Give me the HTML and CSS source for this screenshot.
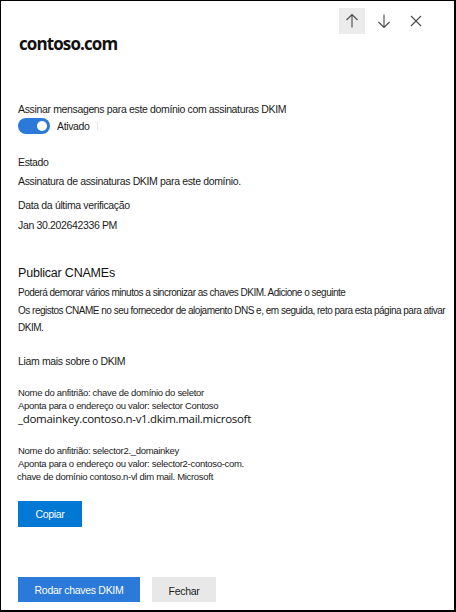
FILE: index.html
```html
<!DOCTYPE html>
<html lang="pt">
  <head>
    <meta charset="UTF-8" />
    <meta name="viewport" content="width=device-width, initial-scale=1.0" />
    <title>contoso.com</title>
    <link rel="stylesheet" href="styles.css">
  </head>
  <body>
    <div class="panel">
      <div class="panel-actions">
        <button class="icon-btn active" title="Anterior">
          <svg width="16" height="16" viewBox="0 0 16 16">
            <path d="M8 1.5V14.5M2.5 7L8 1.5L13.5 7" />
          </svg>
        </button>
        <button class="icon-btn" title="Seguinte">
          <svg width="16" height="16" viewBox="0 0 16 16">
            <path d="M8 1.5V14.5M2.5 9L8 14.5L13.5 9" />
          </svg>
        </button>
        <button class="icon-btn" title="Fechar">
          <svg width="16" height="16" viewBox="0 0 16 16">
            <path d="M3 3L13 13M13 3L3 13" />
          </svg>
        </button>
      </div>

      <h1 class="panel-title">contoso.com</h1>

      <div class="field-label">Assinar mensagens para este domínio com assinaturas DKIM</div>
      <div class="toggle-row">
        <span class="toggle"><span class="knob"></span></span>
        <span class="toggle-text">Ativado</span>
        <span class="toggle-sep"></span>
      </div>

      <div class="info">
        <div class="info-label">Estado</div>
        <div class="info-value">Assinatura de assinaturas DKIM para este domínio.</div>
      </div>
      <div class="info info-date">
        <div class="info-label">Data da última verificação</div>
        <div class="info-value date">Jan 30.202642336 PM</div>
      </div>

      <h2 class="section-title">Publicar CNAMEs</h2>
      <p class="section-text">
        Poderá demorar vários minutos a sincronizar as chaves DKIM. Adicione o seguinte<br />
        Os registos CNAME no seu fornecedor de alojamento DNS e, em seguida, reto para esta página para ativar<br />
        DKIM.
      </p>
      <div class="learn-more">Liam mais sobre o DKIM</div>

      <div class="record">
        <div class="record-line">Nome do anfitrião: chave de domínio do seletor</div>
        <div class="record-line">Aponta para o endereço ou valor: selector Contoso</div>
        <div class="record-value">_domainkey.contoso.n-v1.dkim.mail.microsoft</div>
      </div>
      <div class="record record-second">
        <div class="record-line">Nome do anfitrião: selector2._domainkey</div>
        <div class="record-line">Aponta para o endereço ou valor: selector2-contoso-com.</div>
        <div class="record-line shifted">chave de domínio contoso.n-vl dim mail. Microsoft</div>
      </div>

      <button class="btn btn-primary btn-copy">Copiar</button>

      <div class="panel-footer">
        <button class="btn btn-rotate">Rodar chaves DKIM</button>
        <button class="btn btn-default">Fechar</button>
      </div>
    </div>
  </body>
</html>
```

FILE: styles.css
```css
* {
  margin: 0;
  padding: 0;
  box-sizing: border-box;
}

body {
  font-family: "Liberation Sans", Arial, sans-serif;
  font-size: 10.5px;
  letter-spacing: -0.35px;
  color: #1b1b1b;
  background: #fff;
}

.panel {
  width: 456px;
  height: 612px;
  border-style: solid;
  border-color: #000;
  border-width: 1px 2px 2px 1px;
  padding: 7px 0 8px 17px;
  display: flex;
  flex-direction: column;
}

.panel-actions {
  display: flex;
  justify-content: flex-end;
  gap: 6px;
  padding-right: 25px;
  height: 26px;
}

.icon-btn {
  width: 26px;
  height: 26px;
  border: none;
  background: transparent;
  display: flex;
  align-items: center;
  justify-content: center;
  cursor: pointer;
}

.icon-btn.active {
  background: #ebebeb;
}

.icon-btn svg path {
  fill: none;
  stroke: #4a4a4a;
  stroke-width: 1.1;
}

.panel-title {
  font-family: "Open Sans", sans-serif;
  font-size: 17px;
  font-weight: 700;
  letter-spacing: -0.9px;
  line-height: 20px;
  color: #111;
  margin-left: 1px;
}

.field-label {
  line-height: 16px;
  margin-top: 47px;
}

.toggle-row {
  display: flex;
  align-items: center;
  margin-top: 1px;
  height: 16px;
}

.toggle {
  width: 32px;
  height: 16px;
  border-radius: 8px;
  background: #2b79d8;
  display: flex;
  align-items: center;
  justify-content: flex-end;
  padding-right: 3px;
}

.knob {
  width: 10px;
  height: 10px;
  border-radius: 50%;
  background: #fff;
}

.toggle-text {
  margin-left: 7px;
}

.toggle-sep {
  width: 1px;
  height: 8px;
  background: #e4e4e4;
  margin-left: 7px;
}

.info {
  margin-top: 20px;
  line-height: 16px;
}

.info-value {
  margin-top: 3px;
}

.info-date {
  margin-top: 8px;
}

.info-value.date {
  margin-top: 4px;
}

.section-title {
  font-size: 12.5px;
  font-weight: 400;
  letter-spacing: -0.2px;
  line-height: 20px;
  margin-top: 30px;
  color: #111;
}

.section-text {
  font-size: 10px;
  letter-spacing: -0.5px;
  line-height: 17.5px;
  margin-top: 1px;
  white-space: nowrap;
}

.learn-more {
  line-height: 16px;
  margin-top: 16px;
}

.record {
  margin-top: 17px;
}

.record-second {
  margin-top: 18px;
}

.record-line {
  font-size: 9.5px;
  letter-spacing: -0.3px;
  line-height: 13px;
}

.record-line.shifted {
  margin-left: -1px;
}

.record-value {
  font-family: "Open Sans", sans-serif;
  font-size: 11.5px;
  letter-spacing: -0.3px;
  line-height: 14px;
  color: #111;
}

.btn {
  height: 26px;
  border: none;
  font-family: "Liberation Sans", Arial, sans-serif;
  font-size: 10.5px;
  letter-spacing: -0.3px;
  cursor: pointer;
}

.btn-primary {
  background: #0078d4;
  color: #fff;
}

.btn-copy {
  width: 64px;
  margin-top: 18px;
}

.panel-footer {
  margin-top: auto;
  display: flex;
  gap: 12px;
}

.btn-rotate {
  width: 122px;
  height: 25px;
  background: #2b79d8;
  color: #fff;
}

.btn-default {
  width: 64px;
  height: 25px;
  background: #e8e8e8;
  color: #1b1b1b;
  padding-top: 3px;
}
```
